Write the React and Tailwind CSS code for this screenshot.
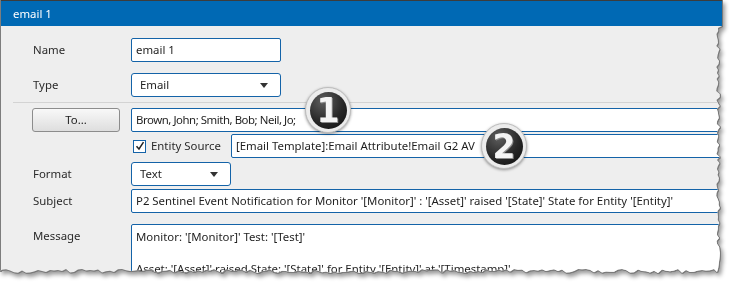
import React from 'react';

// jagged edge for the torn screenshot look
const buildTornClip = () => {
  let seed = 7;
  const rnd = () => {
    seed = (seed * 9301 + 49297) % 233280;
    return seed / 233280;
  };
  const pts = ['0px 0px', '722px 0px', '722px 26px'];
  for (let y = 28; y < 270; y += 3) {
    pts.push(`${(716 + rnd() * 4).toFixed(1)}px ${y}px`);
  }
  pts.push('717px 272px');
  for (let x = 714; x > 0; x -= 4) {
    pts.push(`${x}px ${(269 + rnd() * 4).toFixed(1)}px`);
  }
  pts.push('0px 271px');
  return `polygon(${pts.join(', ')})`;
};

const clip = buildTornClip();

const Caret = () => (
  <svg width="8" height="5" viewBox="0 0 8 5" className="shrink-0">
    <path d="M0 0 L8 0 L4 5 Z" fill="#333" />
  </svg>
);

const Field = ({ children, className = '' }) => (
  <div className={`h-6 bg-white border border-[#1463a8] rounded-[2px] flex items-center px-1 text-[11.4px] text-[#1e1e1e] whitespace-nowrap overflow-hidden ${className}`}>
    {children}
  </div>
);

const Select = ({ value, className = '' }) => (
  <div className={`h-6 bg-white border border-[#1463a8] rounded-[3px] flex items-center justify-between pl-2 pr-3 text-[11.4px] text-[#1e1e1e] ${className}`}>
    <span>{value}</span>
    <Caret />
  </div>
);

const Label = ({ children }) => (
  <div className="w-[130px] shrink-0 pl-8 text-[11.4px] text-[#2a2a2a]">{children}</div>
);

const Badge = ({ n, className = '' }) => (
  <div className={`absolute w-[46px] h-[46px] rounded-full bg-[#ececec] border border-[#bdbdbd] shadow-[0_1px_3px_rgba(0,0,0,0.4)] flex items-center justify-center ${className}`}>
    <div className="w-[37px] h-[37px] rounded-full bg-[radial-gradient(circle_at_35%_25%,#5e5e5e_0%,#282828_55%,#0d0d0d_100%)] flex items-center justify-center">
      <span className="text-[33px] leading-none font-black text-[#f4f4f4] [font-family:'DejaVu_Sans',sans-serif] [text-shadow:1px_1px_0_#8a8a8a]">{n}</span>
    </div>
  </div>
);

export default function App() {
  return (
    <div className="w-[742px] h-[287px] bg-white [font-family:'Noto_Sans',sans-serif]">
      <div className="[filter:drop-shadow(1px_0_0_#7a7a7a)_drop-shadow(0_1px_0_#7a7a7a)_drop-shadow(2px_3px_2px_rgba(0,0,0,0.4))]">
        <div className="relative w-[722px] h-[274px] bg-[#eeeeee] border-l border-[#7d7d7d] overflow-hidden" style={{ clipPath: clip }}>
          <div className="h-[26px] bg-[#0069b4] border-t border-[#3c3c3c] flex items-center pl-3 text-[11.4px] text-white">
            email 1
          </div>

          <div className="pt-3">
            <div className="flex items-center h-6">
              <Label>Name</Label>
              <Field className="w-[150px]">email 1</Field>
            </div>

            <div className="flex items-center h-6 mt-[11px]">
              <Label>Type</Label>
              <Select value="Email" className="w-[150px]" />
            </div>

            <div className="ml-3 mt-[5px] h-px bg-[#d3d3d3]" />

            <div className="flex items-center h-6 mt-[5px]">
              <div className="w-[130px] shrink-0 pl-[31px]">
                <div className="w-[88px] h-6 rounded-[3px] border border-[#8c8c8c] bg-[linear-gradient(#f8f8f8,#dedede)] flex items-center justify-center text-[11.4px] text-[#222]">
                  To...
                </div>
              </div>
              <Field className="flex-1 tracking-[-0.45px]">Brown, John; Smith, Bob; Neil, Jo;</Field>
            </div>

            <div className="flex items-center h-6 mt-[2px]">
              <div className="w-[132px] shrink-0" />
              <div className="w-[13px] h-[13px] bg-white border border-[#1463a8] flex items-center justify-center">
                <svg width="10" height="10" viewBox="0 0 10 10">
                  <path d="M1.5 5.2 L4 8 L8.5 1.2" fill="none" stroke="#222" strokeWidth="1.5" />
                </svg>
              </div>
              <span className="ml-[5px] w-[80px] text-[11.4px] text-[#2a2a2a]">Entity Source</span>
              <Field className="flex-1">[Email Template]:Email Attribute!Email G2 AV</Field>
            </div>

            <div className="flex items-center h-6 mt-[4px]">
              <Label>Format</Label>
              <Select value="Text" className="w-[100px]" />
            </div>

            <div className="flex items-center h-6 mt-[3px]">
              <Label>Subject</Label>
              <Field className="flex-1">
                P2 Sentinel Event Notification for Monitor '[Monitor]' : '[Asset]' raised '[State]' State for Entity '[Entity]'
              </Field>
            </div>

            <div className="flex items-start mt-[11px]">
              <div className="w-[130px] shrink-0 pl-8 pt-[4px] leading-4 text-[11.4px] text-[#2a2a2a]">Message</div>
              <div className="flex-1 h-[80px] bg-white border border-[#1463a8] rounded-[2px] px-1 pt-[4px] text-[11.4px] leading-4 text-[#1e1e1e] whitespace-nowrap">
                <div>Monitor: '[Monitor]' Test: '[Test]'</div>
                <div>&nbsp;</div>
                <div>Asset: '[Asset]' raised State: '[State]' for Entity '[Entity]' at '[Timestamp]'</div>
              </div>
            </div>
          </div>

          <Badge n="1" className="left-[304px] top-[87px]" />
          <Badge n="2" className="left-[480px] top-[123px]" />
        </div>
      </div>
    </div>
  );
}
